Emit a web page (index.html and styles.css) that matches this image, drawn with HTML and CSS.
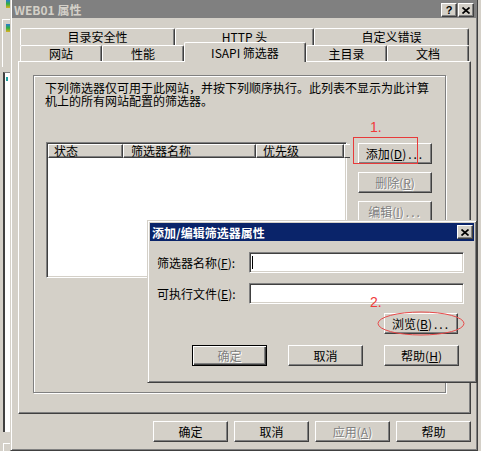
FILE: index.html
```html
<!DOCTYPE html>
<html lang="zh-CN">
<head>
<meta charset="utf-8">
<title>WEB01 属性</title>
<link rel="stylesheet" href="styles.css">
</head>
<body>
<div class="screen">
  <div class="side">
    <div class="side-top"><span class="sicon"></span></div>
    <div class="side-box"><span class="sicon"></span></div>
    <div class="side-list"><span class="sdot"></span></div>
    <div class="side-foot"></div>
  </div>

  <div class="window">
    <div class="titlebar">
      <span class="title-text">WEB01 属性</span>
      <span class="tbtn help">?</span>
      <span class="tbtn close"><svg width="8" height="7" viewBox="0 0 8 7"><path d="M0.5 0.5L7.5 6.5M7.5 0.5L0.5 6.5" stroke="#000" stroke-width="1.7"/></svg></span>
    </div>

    <div class="tabs">
      <div class="tabrow back">
        <div class="tab w155">目录安全性</div>
        <div class="tab w139">HTTP 头</div>
        <div class="tab w155">自定义错误</div>
      </div>
      <div class="tabrow front">
        <div class="tab w82">网站</div>
        <div class="tab w82">性能</div>
        <div class="tab sel w122">ISAPI 筛选器</div>
        <div class="tab w81">主目录</div>
        <div class="tab w82">文档</div>
      </div>
    </div>

    <div class="panel">
      <div class="group">
        <p class="desc">下列筛选器仅可用于此网站，并按下列顺序执行。此列表不显示为此计算<br>机上的所有网站配置的筛选器。</p>
        <div class="lrow">
          <div class="listview">
            <div class="lhead">
              <div class="hc c1">状态</div>
              <div class="hc c2">筛选器名称</div>
              <div class="hc c3">优先级</div>
              <div class="hc cfill"></div>
            </div>
          </div>
          <div class="sidebtns">
            <button class="btn b74">添加(<u>D</u>)<span class="dots">...</span></button>
            <button class="btn b74 dis">删除(<u>R</u>)</button>
            <button class="btn b74 dis">编辑(<u>I</u>)<span class="dots">...</span></button>
          </div>
        </div>
      </div>
    </div>

    <div class="footer">
      <button class="btn">确定</button>
      <button class="btn">取消</button>
      <button class="btn dis">应用(<u>A</u>)</button>
      <button class="btn">帮助</button>
    </div>
  </div>

  <div class="dialog">
    <div class="dtitle">
      <span class="dtitle-text">添加/编辑筛选器属性</span>
      <span class="tbtn close"><svg width="8" height="7" viewBox="0 0 8 7"><path d="M0.5 0.5L7.5 6.5M7.5 0.5L0.5 6.5" stroke="#000" stroke-width="1.7"/></svg></span>
    </div>
    <div class="dbody">
      <div class="frow">
        <label class="flabel">筛选器名称(<u>F</u>):</label>
        <div class="field"><span class="caret"></span></div>
      </div>
      <div class="frow r2">
        <label class="flabel">可执行文件(<u>E</u>):</label>
        <div class="field"></div>
      </div>
      <div class="browse-row">
        <button class="btn b74">浏览(<u>B</u>)<span class="dots">...</span></button>
      </div>
      <div class="dfooter">
        <button class="btn def dis">确定</button>
        <button class="btn">取消</button>
        <button class="btn">帮助(<u>H</u>)</button>
      </div>
    </div>
  </div>

  <span class="red-num n1">1.</span>
  <span class="red-box"></span>
  <span class="red-num n2">2.</span>
  <svg class="red-ellipse" width="88" height="25" viewBox="0 0 88 25"><ellipse cx="44" cy="12.5" rx="43" ry="11.5" fill="none" stroke="#e84a4a" stroke-width="1"/></svg>
</div>
</body>
</html>
```

FILE: styles.css
```css
* { box-sizing: border-box; margin: 0; padding: 0; }
html, body { width: 481px; height: 451px; overflow: hidden; }
body {
  background: #d4d0c8;
  font-family: "Noto Sans CJK SC", "Liberation Sans", sans-serif;
  font-size: 12px;
  color: #000;
}
.screen { position: relative; display: flex; width: 481px; height: 451px; }

/* background window strip on the left */
.side { width: 10px; display: flex; flex-direction: column; flex: none; }
.side-top { height: 19px; position: relative; }
.side-top .sicon { position: absolute; left: 6px; top: 0; }
.sicon { display: block; width: 4px; height: 8px; background: linear-gradient(#2a7ad8, #30b040 50%, #e0b020); }
.side-box { height: 48px; margin-left: 2px; border-top: 1px solid #fff; border-left: 1px solid #fff; padding: 4px 0 0 3px; }
.side-list { height: 360px; margin: 5px 0 0 3px; border-left: 2px solid #404040; border-top: 1px solid #808080; background: #fff; padding: 4px 0 0 1px; }
.sdot { display: block; width: 2px; height: 4px; background: #20a0a0; }
.side-foot { margin: 11px 0 0 3px; height: 8px; border-top: 1px solid #fff; border-left: 1px solid #fff; }

/* main window */
.window {
  width: 468px; height: 451px; flex: none;
  border-left: 1px solid #d4d0c8;
  border-right: 1px solid #404040;
  border-bottom: 1px solid #404040;
  box-shadow: inset 1px 0 #fff, inset -1px -1px #808080;
  padding: 0 1px 1px 1px;
  display: flex; flex-direction: column;
}
.titlebar {
  height: 18px; background: #808080;
  display: flex; align-items: flex-start;
  padding: 3px 2px 0 2px;
}
.title-text { color: #d4d0c8; font-weight: bold; font-size: 12px; line-height: 12px; flex: 1; padding-top: 1px; }
.tbtn {
  width: 16px; height: 14px; background: #d4d0c8;
  border: 1px solid; border-color: #fff #404040 #404040 #fff;
  box-shadow: inset -1px -1px #808080;
  display: flex; align-items: center; justify-content: center;
  flex: none;
}
.tbtn.help { font-family: "Liberation Sans", sans-serif; font-weight: bold; font-size: 11px; line-height: 11px; margin-right: 1px; }
.tbtn.close svg { display: block; }

/* tabs */
.tabs { margin-top: 10px; padding-left: 8px; }
.tabrow { display: flex; }
.tabrow.back { height: 17px; }
.tabrow.front { height: 16px; align-items: flex-end; }
.tab {
  height: 100%;
  background: #d4d0c8;
  border-top: 1px solid #fff; border-left: 1px solid #fff; border-right: 1px solid #404040;
  box-shadow: inset -1px 0 #808080;
  border-radius: 2px 2px 0 0;
  display: flex; align-items: center; justify-content: center;
  white-space: nowrap; line-height: 12px;
  flex: none;
}
.tabrow.front .tab { padding-top: 1px; }
.tabrow.front .tab.sel { height: 20px; margin-bottom: -1px; position: relative; z-index: 2; padding-top: 0; }
.w155 { width: 155px; } .w139 { width: 139px; }
.w82 { width: 82px; } .w81 { width: 81px; } .w122 { width: 122px; }

/* panel */
.panel {
  margin-left: 6px; width: 453px; height: 353px;
  border: 1px solid; border-color: #fff #404040 #404040 #fff;
  box-shadow: inset -1px -1px #808080;
  padding: 13px 0 0 14px;
}
.group {
  width: 413px; height: 318px;
  border: 1px solid #808080;
  box-shadow: inset 1px 1px #fff, 1px 1px #fff;
  padding: 5px 0 0 11px;
}
.desc { line-height: 13px; white-space: nowrap; }
.lrow { display: flex; margin-top: 35px; }
.listview {
  margin-left: 1px; width: 301px; height: 136px;
  background: #fff;
  border: 1px solid; border-color: #808080 #fff #fff #808080;
  box-shadow: inset 1px 1px #404040, inset -1px -1px #d4d0c8;
  padding: 1px;
}
.lhead { display: flex; height: 14px; }
.hc {
  background: #d4d0c8; height: 14px;
  border: 1px solid; border-color: #fff #404040 #404040 #fff;
  box-shadow: inset -1px -1px #808080;
  padding-left: 5px; line-height: 12px; white-space: nowrap;
  flex: none;
}
.c1 { width: 75px; } .c2 { width: 133px; padding-left: 7px; } .c3 { width: 88px; padding-left: 6px; }
.cfill { flex: 1; border-right: none; box-shadow: none; }
.sidebtns { margin-left: 11px; padding-top: 1px; display: flex; flex-direction: column; gap: 8px; }

/* buttons */
.btn {
  appearance: none; -webkit-appearance: none;
  font: inherit; color: #000; background: #d4d0c8;
  width: 75px; height: 21px;
  border: 1px solid; border-color: #fff #404040 #404040 #fff;
  box-shadow: inset -1px -1px #808080;
  display: flex; align-items: center; justify-content: center;
  padding: 0; line-height: 12px; white-space: nowrap;
  flex: none;
}
.btn.b74 { width: 74px; }
.btn u { text-decoration: underline; text-underline-offset: 1px; }
.btn .dots { letter-spacing: 2px; margin-left: 2px; }
.btn.dis { color: #808080; text-shadow: 1px 1px #fff; }
.btn.def {
  border-color: #000;
  box-shadow: inset 1px 1px #fff, inset -1px -1px #404040, inset -2px -2px #808080;
}
.footer { display: flex; justify-content: flex-end; gap: 6px; margin-top: 7px; padding-right: 5px; }

/* dialog */
.dialog {
  position: absolute; left: 147px; top: 220px;
  width: 330px; height: 163px;
  background: #d4d0c8;
  border: 1px solid; border-color: #d4d0c8 #404040 #404040 #d4d0c8;
  box-shadow: inset 1px 1px #fff, inset -1px -1px #808080;
  padding: 2px;
  z-index: 5;
}
.dtitle {
  height: 18px; background: #0a246a;
  display: flex; align-items: flex-start;
  padding: 2px 1px 0 2px;
}
.dtitle-text { flex: 1; color: #fff; font-weight: bold; line-height: 12px; padding-top: 2px; }
.dbody { padding: 11px 10px 0 7px; }
.frow { display: flex; align-items: center; height: 21px; }
.frow.r2 { margin-top: 10px; }
.flabel { width: 92px; flex: none; line-height: 12px; white-space: nowrap; }
.flabel u { text-underline-offset: 1px; }
.field {
  flex: 1; height: 21px; background: #fff;
  border: 1px solid; border-color: #808080 #fff #fff #808080;
  box-shadow: inset 1px 1px #404040, inset -1px -1px #d4d0c8;
  padding: 3px 0 0 2px;
}
.caret { display: block; width: 1px; height: 13px; background: #000; }
.browse-row { display: flex; justify-content: flex-end; margin-top: 9px; padding-right: 6px; }
.dfooter { display: flex; gap: 21px; margin-top: 11px; padding-left: 35px; }

/* red annotations */
.red-num {
  position: absolute; color: #f03a3a;
  font-family: "Liberation Sans", sans-serif; font-size: 14px; line-height: 14px;
  z-index: 10;
}
.n1 { left: 370px; top: 120px; }
.n2 { left: 370px; top: 295px; }
.red-box { position: absolute; left: 353px; top: 137px; width: 65px; height: 27px; border: 1px solid #e83a3a; z-index: 10; }
.red-ellipse { position: absolute; left: 377px; top: 311px; z-index: 10; }
```
